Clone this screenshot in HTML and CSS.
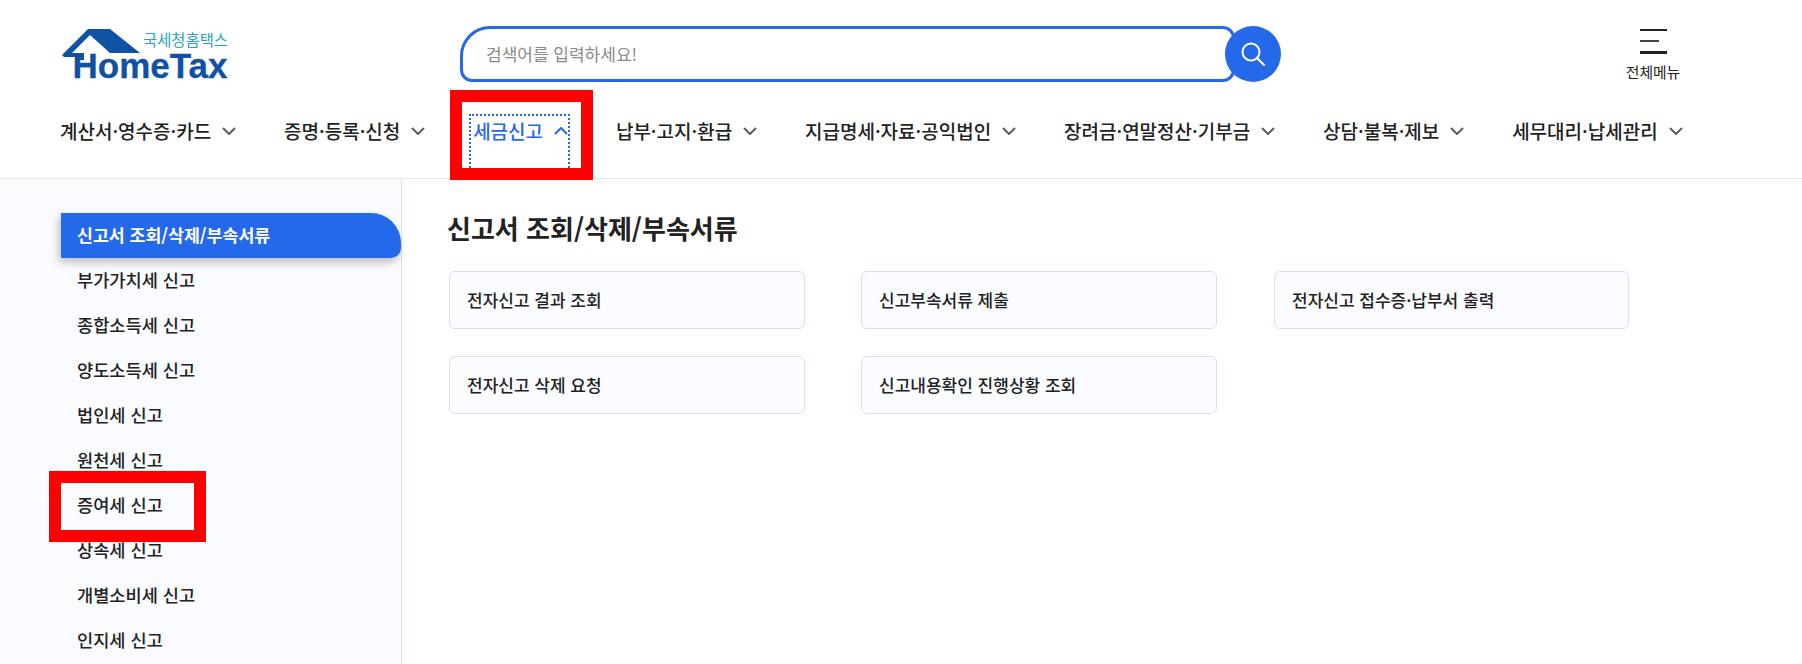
FILE: index.html
```html
<!DOCTYPE html>
<html lang="ko">
<head>
<meta charset="utf-8">
<title>세금신고</title>
<link rel="stylesheet" href="styles.css">
</head>
<body>
<header class="header">
  <div class="top">
    <a class="logo" href="#">
      <svg class="logo-house" width="90" height="40" viewBox="60 26 90 40" aria-hidden="true">
        <path d="M62 55 L88 29 L110 29 L140 53 L110 53 L90 35 L72 53 H84 V60 H75 V57 H64 Z" fill="#0f52a5"/>
      </svg>
      <span class="logo-kr">국세청홈택스</span>
      <span class="logo-en">HomeTax</span>
    </a>
    <form class="search">
      <div class="search-box"><span class="placeholder">검색어를 입력하세요!</span></div>
      <button class="search-btn" type="button" aria-label="검색">
        <svg width="24" height="24" viewBox="0 0 24 24" fill="none" stroke="#fff" stroke-width="2"><circle cx="10" cy="10" r="8.5"/><path d="M16.5 16.5 L23 23" stroke-linecap="round"/></svg>
      </button>
    </form>
    <div class="allmenu">
      <span class="bars"><i class="bar"></i><i class="bar bar-mid"></i><i class="bar bar-low"></i></span>
      <span class="allmenu-label">전체메뉴</span>
    </div>
  </div>
  <nav class="nav">
    <a class="nav-item">계산서·영수증·카드<svg class="chev" viewBox="0 0 14 8"><path d="M1 1 L7 7 L13 1"/></svg></a>
    <a class="nav-item">증명·등록·신청<svg class="chev" viewBox="0 0 14 8"><path d="M1 1 L7 7 L13 1"/></svg></a>
    <a class="nav-item active">세금신고<svg class="chev" viewBox="0 0 14 8"><path d="M1 7 L7 1 L13 7"/></svg></a>
    <a class="nav-item">납부·고지·환급<svg class="chev" viewBox="0 0 14 8"><path d="M1 1 L7 7 L13 1"/></svg></a>
    <a class="nav-item">지급명세·자료·공익법인<svg class="chev" viewBox="0 0 14 8"><path d="M1 1 L7 7 L13 1"/></svg></a>
    <a class="nav-item">장려금·연말정산·기부금<svg class="chev" viewBox="0 0 14 8"><path d="M1 1 L7 7 L13 1"/></svg></a>
    <a class="nav-item">상담·불복·제보<svg class="chev" viewBox="0 0 14 8"><path d="M1 1 L7 7 L13 1"/></svg></a>
    <a class="nav-item">세무대리·납세관리<svg class="chev" viewBox="0 0 14 8"><path d="M1 1 L7 7 L13 1"/></svg></a>
  </nav>
</header>
<div class="body">
  <aside class="side">
    <a class="side-item current">신고서 조회/삭제/부속서류</a>
    <a class="side-item">부가가치세 신고</a>
    <a class="side-item">종합소득세 신고</a>
    <a class="side-item">양도소득세 신고</a>
    <a class="side-item">법인세 신고</a>
    <a class="side-item">원천세 신고</a>
    <a class="side-item">증여세 신고</a>
    <a class="side-item">상속세 신고</a>
    <a class="side-item">개별소비세 신고</a>
    <a class="side-item">인지세 신고</a>
  </aside>
  <main class="main">
    <h1 class="title">신고서 조회/삭제/부속서류</h1>
    <div class="cards">
      <a class="card">전자신고 결과 조회</a>
      <a class="card">신고부속서류 제출</a>
      <a class="card">전자신고 접수증·납부서 출력</a>
      <a class="card">전자신고 삭제 요청</a>
      <a class="card">신고내용확인 진행상황 조회</a>
    </div>
  </main>
</div>
<div class="mark mark-nav"></div>
<div class="mark mark-side"></div>
</body>
</html>
```
FILE: styles.css
```css
* { box-sizing: border-box; }
html, body { margin: 0; height: 664px; overflow: hidden; background: #fff; }
body {
  position: relative;
  font-family: "Noto Sans CJK KR", "Noto Sans", sans-serif;
  color: #222;
}
a { color: inherit; text-decoration: none; }

.header { height: 179px; border-bottom: 1px solid #e6e6e6; }
.top { height: 116px; display: flex; padding: 26px 0 0 60px; }

.logo { position: relative; display: block; width: 170px; height: 58px; flex: none; }
.logo-house { position: absolute; left: 0; top: 0; }
.logo-kr { position: absolute; left: 83px; top: 5px; font-size: 15.4px; line-height: 16px; color: #2ba3bd; white-space: nowrap; }
.logo-en { position: absolute; left: 12.5px; top: 24px; font-family: "Liberation Sans", Arial, sans-serif; font-weight: 700; font-size: 35px; line-height: 32px; color: #0f52a5; white-space: nowrap; -webkit-text-stroke: 0.3px #0f52a5; }

.search { display: flex; margin-left: 230px; height: 56px; }
.search-box {
  width: 775px; height: 56px;
  border: 3px solid #2469ea;
  border-radius: 30px 12px 12px 12px;
  padding: 0 0 2px 23px;
  display: flex; align-items: center;
  font-size: 17px; color: #8a8a8a;
}
.search-btn {
  width: 56px; height: 56px; margin-left: -10px;
  border: 0; border-radius: 50%; background: #2469ea;
  display: flex; align-items: center; justify-content: center; padding: 0;
  position: relative;
}

.allmenu { margin-left: 337px; width: 70px; display: flex; flex-direction: column; align-items: center; }
.bars { width: 27px; display: flex; flex-direction: column; gap: 9px; margin-top: 3px; }
.bar { display: block; height: 2px; background: #222; }
.bar-mid { width: 19px; margin-left: 0; background: #444; }
.bar-low { height: 3px; }
.allmenu-label { font-size: 14.8px; line-height: 18px; margin-top: 9px; color: #222; white-space: nowrap; }

.nav { display: flex; padding-left: 60px; gap: 47.85px; }
.nav-item {
  display: flex; align-items: flex-start; height: 54px; line-height: 30px;
  font-size: 19px; font-weight: 500; color: #222; white-space: nowrap;
}
.nav-item.active { color: #2469ea; outline: 2px dotted #2469ea; padding-left: 2px; margin-left: -2px; }
.chev { width: 14px; height: 8px; margin: 11px 0 0 11px; fill: none; stroke: #5a5a66; stroke-width: 2; flex: none; }
.active .chev { stroke: #2469ea; }

.body { display: flex; height: 485px; overflow: hidden; }
.side {
  width: 402px; flex: none; background: #f9fbff;
  border-right: 1px solid #d9e3f3;
  padding: 34px 0 0 61px;
}
.side-item {
  display: flex; align-items: center; height: 45px; padding: 0 0 2px 16px;
  font-size: 17.6px; font-weight: 500; color: #222;
}
.side-item.current {
  background: #2469ea; color: #fff; font-weight: 700; font-size: 17.3px;
  border-radius: 0 30px 10px 0;
  box-shadow: -2px 4px 8px rgba(0,0,0,.25);
}

.main { flex: 1; padding: 32px 0 0 45px; }
.title { margin: 0; font-size: 26px; line-height: 34px; font-weight: 700; color: #222; }
.cards { display: grid; grid-template-columns: repeat(3, 356px); gap: 27px 56px; margin: 26px 0 0 2px; }
.card {
  height: 58px; display: flex; align-items: center; padding: 0 0 2px 17px;
  background: #fbfcff; border: 1px solid #d3e0f8; border-radius: 6px;
  font-size: 17px; font-weight: 500; color: #222;
}
.card:nth-child(3) { margin-left: 1px; }

.mark { position: absolute; border: 12px solid #f00; pointer-events: none; }
.mark-nav { left: 450px; top: 90px; width: 143px; height: 90px; }
.mark-side { left: 49px; top: 471px; width: 157px; height: 71px; }
```
